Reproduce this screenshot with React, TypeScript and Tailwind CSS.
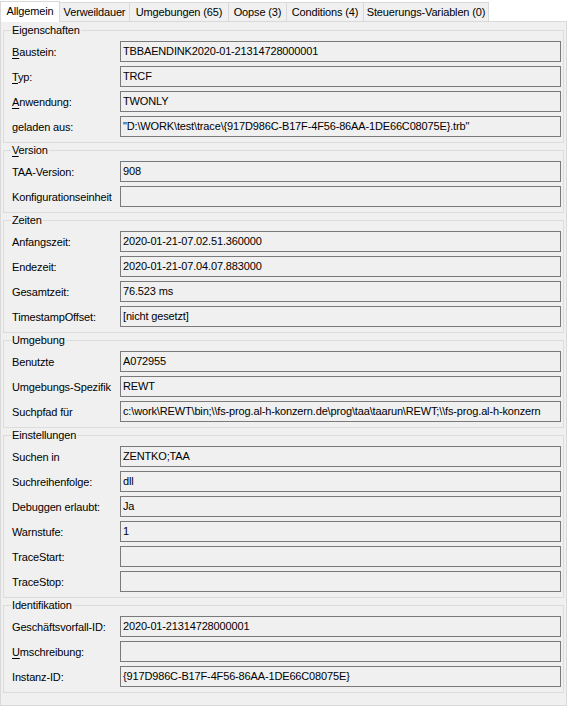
import React from "react";

type Row = { label: React.ReactNode; value?: string };
type Group = { title: React.ReactNode; rows: Row[] };

const M = ({ c }: { c: string }) => <span className="underline underline-offset-[2px]">{c}</span>;

const groups: Group[] = [
  {
    title: "Eigenschaften",
    rows: [
      { label: <><M c="B" />austein:</>, value: "TBBAENDINK2020-01-21314728000001" },
      { label: <><M c="T" />yp:</>, value: "TRCF" },
      { label: <><M c="A" />nwendung:</>, value: "TWONLY" },
      { label: "geladen aus:", value: "\"D:\\WORK\\test\\trace\\{917D986C-B17F-4F56-86AA-1DE66C08075E}.trb\"" },
    ],
  },
  {
    title: <><M c="V" />ersion</>,
    rows: [
      { label: "TAA-Version:", value: "908" },
      { label: "Konfigurationseinheit" },
    ],
  },
  {
    title: "Zeiten",
    rows: [
      { label: "Anfangszeit:", value: "2020-01-21-07.02.51.360000" },
      { label: "Endezeit:", value: "2020-01-21-07.04.07.883000" },
      { label: "Gesamtzeit:", value: "76.523 ms" },
      { label: "TimestampOffset:", value: "[nicht gesetzt]" },
    ],
  },
  {
    title: "Umgebung",
    rows: [
      { label: "Benutzte", value: "A072955" },
      { label: "Umgebungs-Spezifik", value: "REWT" },
      {
        label: "Suchpfad für",
        value: "c:\\work\\REWT\\bin;\\\\fs-prog.al-h-konzern.de\\prog\\taa\\taarun\\REWT;\\\\fs-prog.al-h-konzern",
      },
    ],
  },
  {
    title: "Einstellungen",
    rows: [
      { label: "Suchen in", value: "ZENTKO;TAA" },
      { label: "Suchreihenfolge:", value: "dll" },
      { label: "Debuggen erlaubt:", value: "Ja" },
      { label: "Warnstufe:", value: "1" },
      { label: "TraceStart:" },
      { label: "TraceStop:" },
    ],
  },
  {
    title: "Identifikation",
    rows: [
      { label: "Geschäftsvorfall-ID:", value: "2020-01-21314728000001" },
      { label: <><M c="U" />mschreibung:</> },
      { label: "Instanz-ID:", value: "{917D986C-B17F-4F56-86AA-1DE66C08075E}" },
    ],
  },
];

const tabs = [
  { name: "Allgemein", w: "w-[60px]" },
  { name: "Verweildauer", w: "w-[70px]" },
  { name: "Umgebungen (65)", w: "w-[99px]" },
  { name: "Oopse (3)", w: "w-[58px]" },
  { name: "Conditions (4)", w: "w-[77px]" },
  { name: "Steuerungs-Variablen (0)", w: "w-[125px]" },
];

export default function App() {
  return (
    <div className="w-[568px] h-[706px] bg-white text-[11px] tracking-[-0.15px] text-black font-['Liberation_Sans',Arial,sans-serif] flex flex-col overflow-hidden">
      {/* tab strip */}
      <div className="flex items-end h-[21px] shrink-0">
        {tabs.map((t, i) =>
          i === 0 ? (
            <div
              key={t.name}
              className={`${t.w} h-[21px] bg-white border-l border-r border-t border-[#d9d9d9] flex items-center justify-center leading-[14px] relative z-10 -mb-px pb-[2px]`}
            >
              {t.name}
            </div>
          ) : (
            <div
              key={t.name}
              className={`${t.w} h-[19px] bg-[#f0f0f0] border-t border-r border-[#d9d9d9] flex items-center justify-center leading-[14px]`}
            >
              {t.name}
            </div>
          )
        )}
      </div>

      {/* tab page */}
      <div className="w-[567px] flex-1 bg-[#f0f0f0] border border-[#d9d9d9] pt-[1px] px-[2px] flex flex-col">
        {groups.map((g, gi) => (
          <fieldset key={gi} className="border border-[#dcdcdc] pl-[8px] pr-[2px] pt-[4px] pb-[5px] m-0 min-w-0">
            <legend className="leading-[14px] px-[1px] -ml-[1px]">{g.title}</legend>
            <div className="flex flex-col gap-[4px]">
              {g.rows.map((r, ri) => (
                <div key={ri} className="grid grid-cols-[108px_1fr] items-center">
                  <div className="whitespace-nowrap leading-[14px]">{r.label}</div>
                  <div className="h-[21px] border border-[#7a7a7a] bg-[#f0f0f0] pl-[2px] leading-[19px] whitespace-nowrap overflow-hidden">
                    {r.value ?? ""}
                  </div>
                </div>
              ))}
            </div>
          </fieldset>
        ))}
      </div>
    </div>
  );
}
